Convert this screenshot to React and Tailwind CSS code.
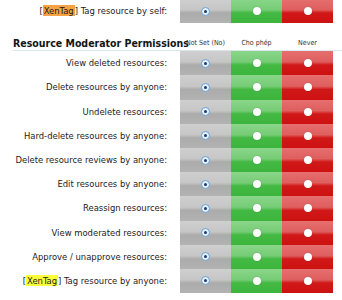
const rows = [
  'View deleted resources:',
  'Delete resources by anyone:',
  'Undelete resources:',
  'Hard-delete resources by anyone:',
  'Delete resource reviews by anyone:',
  'Edit resources by anyone:',
  'Reassign resources:',
  'View moderated resources:',
  'Approve / unapprove resources:',
  null,
]

function Dot() {
  return <span className="block w-[8px] h-[8px] rounded-full bg-white shadow-[0_0_1px_rgba(0,0,0,0.35)]" />
}

function Selected() {
  return (
    <span className="flex items-center justify-center w-[9px] h-[9px] rounded-full bg-[#e4f0fb] border border-[#6d9fd4]">
      <span className="block w-[3px] h-[3px] rounded-full bg-[#1b3a6b]" />
    </span>
  )
}

function PermRow({ label }) {
  return (
    <div className="flex h-[24.2px]">
      <div className="w-[180px] pr-[13px] flex items-center justify-end text-[9.4px] text-[#1c1c1c] whitespace-nowrap">
        {label}
      </div>
      <div className="w-[51px] flex items-center justify-center bg-[linear-gradient(to_bottom,#cfcfcf_0%,#c6c6c6_45%,#ababab_58%,#b3b3b3_100%)]">
        <Selected />
      </div>
      <div className="w-[51px] flex items-center justify-center bg-[linear-gradient(to_bottom,#8ad68a_0%,#76cc76_45%,#43b943_58%,#3db53d_100%)]">
        <Dot />
      </div>
      <div className="w-[51px] flex items-center justify-center bg-[linear-gradient(to_bottom,#e66f6f_0%,#df5e5e_45%,#d11818_58%,#cc1111_100%)]">
        <Dot />
      </div>
    </div>
  )
}

export default function App() {
  return (
    <div className="w-[342px] h-[300px] overflow-hidden bg-white font-['DejaVu_Sans_Condensed','DejaVu_Sans',sans-serif]">
      <div className="-mt-px">
        <PermRow label={<span>[<span className="bg-[#f5a244] px-px">XenTag</span>] Tag resource by self:</span>} />
      </div>
      <div className="flex h-[28px] items-end pb-[1px] ml-[13px] border-b border-[#dbe5ec]">
        <div className="w-[167px] text-[10.5px] leading-[12px] font-bold text-[#141414] whitespace-nowrap">Resource Moderator Permissions</div>
        <div className="w-[51px] text-center text-[7px] leading-[11px] text-[#333] whitespace-nowrap">Not Set (No)</div>
        <div className="w-[51px] text-center text-[7px] leading-[11px] text-[#333] whitespace-nowrap">Cho phép</div>
        <div className="w-[51px] text-center text-[7px] leading-[11px] text-[#333] whitespace-nowrap">Never</div>
      </div>
      {rows.map((r, i) => (
        <PermRow
          key={i}
          label={r ?? <span>[<span className="bg-[#ffff3a] px-px">XenTag</span>] Tag resource by anyone:</span>}
        />
      ))}
    </div>
  )
}
